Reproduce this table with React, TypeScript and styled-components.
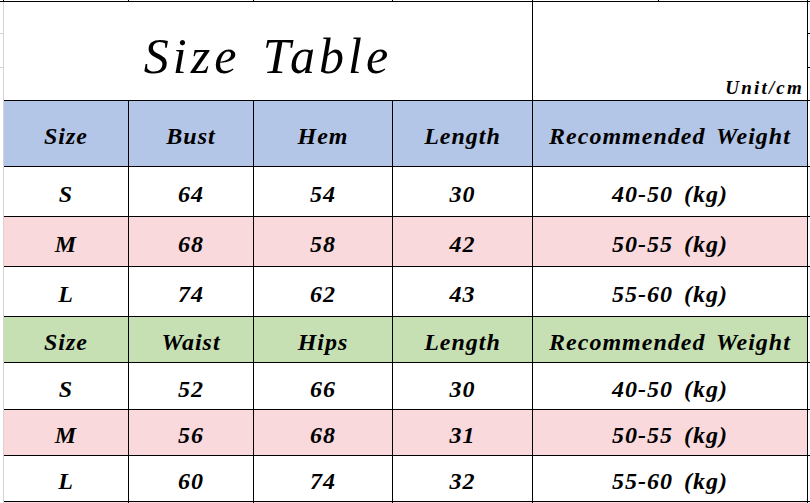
import React from "react";
import styled, { createGlobalStyle } from "styled-components";

const GlobalStyle = createGlobalStyle`
  html, body {
    margin: 0;
    padding: 0;
    background: #ffffff;
    overflow: hidden;
  }
`;

const COLS = "4px 125px 125px 139px 140px 275px 1fr";

const BLUE = "#b4c6e7";
const GREEN = "#c6e0b4";
const PINK = "#f9d9dc";

type Row = { cells: string[]; bg: string; h: number };

const rows: Row[] = [
  { cells: ["Size", "Bust", "Hem", "Length", "Recommended Weight"], bg: BLUE, h: 66 },
  { cells: ["S", "64", "54", "30", "40-50 (kg)"], bg: "#ffffff", h: 50 },
  { cells: ["M", "68", "58", "42", "50-55 (kg)"], bg: PINK, h: 50 },
  { cells: ["L", "74", "62", "43", "55-60 (kg)"], bg: "#ffffff", h: 50 },
  { cells: ["Size", "Waist", "Hips", "Length", "Recommended Weight"], bg: GREEN, h: 46 },
  { cells: ["S", "52", "66", "30", "40-50 (kg)"], bg: "#ffffff", h: 47 },
  { cells: ["M", "56", "68", "31", "50-55 (kg)"], bg: PINK, h: 46 },
  { cells: ["L", "60", "74", "32", "55-60 (kg)"], bg: "#ffffff", h: 46 },
];

const Sheet = styled.div`
  width: 810px;
  height: 503px;
  overflow: hidden;
  display: flex;
  flex-direction: column;
`;

const Strip = styled.div`
  display: grid;
  grid-template-columns: 4px 125px 125px 139px 140px 126px 149px 1fr;
  height: 2px;
  border-bottom: 1px solid #000;
  box-sizing: border-box;
`;

const Tick = styled.div`
  border-right: 1px solid #000;
`;

const GridRow = styled.div<{ $h: number }>`
  display: grid;
  grid-template-columns: ${COLS};
  height: ${(p) => p.$h}px;
  flex-shrink: 0;
`;

const Gutter = styled.div<{ $ticks?: boolean }>`
  border-right: 1px solid #d4d4d4;
  box-sizing: border-box;
  background: ${(p) =>
    p.$ticks
      ? "linear-gradient(#fff 31px, #d4d4d4 31px, #d4d4d4 32px, #fff 32px, #fff 65px, #d4d4d4 65px, #d4d4d4 66px, #fff 66px)"
      : "#fff"};
`;

const Stub = styled.div<{ $ticks?: boolean }>`
  border-bottom: 1px solid #000;
  box-sizing: border-box;
  background: ${(p) =>
    p.$ticks
      ? "linear-gradient(#fff 31px, #000 31px, #000 32px, #fff 32px, #fff 65px, #000 65px, #000 66px, #fff 66px)"
      : "#fff"};
`;

const Cell = styled.div<{ $bg: string }>`
  background: ${(p) => p.$bg};
  border-right: 1px solid #000;
  border-bottom: 1px solid #000;
  box-sizing: border-box;
  display: flex;
  align-items: center;
  justify-content: center;
  padding-top: 6px;
  font-family: "Liberation Serif", "DejaVu Serif", serif;
  font-style: italic;
  font-weight: bold;
  font-size: 24px;
  letter-spacing: 1px;
  word-spacing: 4px;
  color: #000;
  white-space: nowrap;
`;

const TitleCell = styled(Cell)`
  grid-column: span 4;
  padding-top: 10px;
  font-weight: normal;
  font-size: 50px;
  letter-spacing: 4px;
  word-spacing: 6px;
`;

const UnitCell = styled(Cell)`
  align-items: flex-end;
  justify-content: flex-end;
  padding: 0 3px 1px 0;
  font-size: 19px;
  letter-spacing: 2.2px;
`;

const Tail = styled.div`
  display: grid;
  grid-template-columns: ${COLS};
  flex: 1;
`;

const TailCell = styled.div`
  background: ${PINK};
  border-right: 1px solid #000;
`;

export default function App() {
  return (
    <>
      <GlobalStyle />
      <Sheet>
        <Strip>
          {Array.from({ length: 7 }).map((_, i) => (
            <Tick key={i} />
          ))}
        </Strip>
        <GridRow $h={99}>
          <Gutter $ticks />
          <TitleCell $bg="#fff">Size Table</TitleCell>
          <UnitCell $bg="#fff">Unit/cm</UnitCell>
          <Stub $ticks />
        </GridRow>
        {rows.map((r, i) => (
          <GridRow key={i} $h={r.h}>
            <Gutter />
            {r.cells.map((c, j) => (
              <Cell key={j} $bg={r.bg}>
                {c}
              </Cell>
            ))}
            <Stub />
          </GridRow>
        ))}
        <Tail>
          <Gutter />
          {Array.from({ length: 5 }).map((_, i) => (
            <TailCell key={i} />
          ))}
        </Tail>
      </Sheet>
    </>
  );
}
